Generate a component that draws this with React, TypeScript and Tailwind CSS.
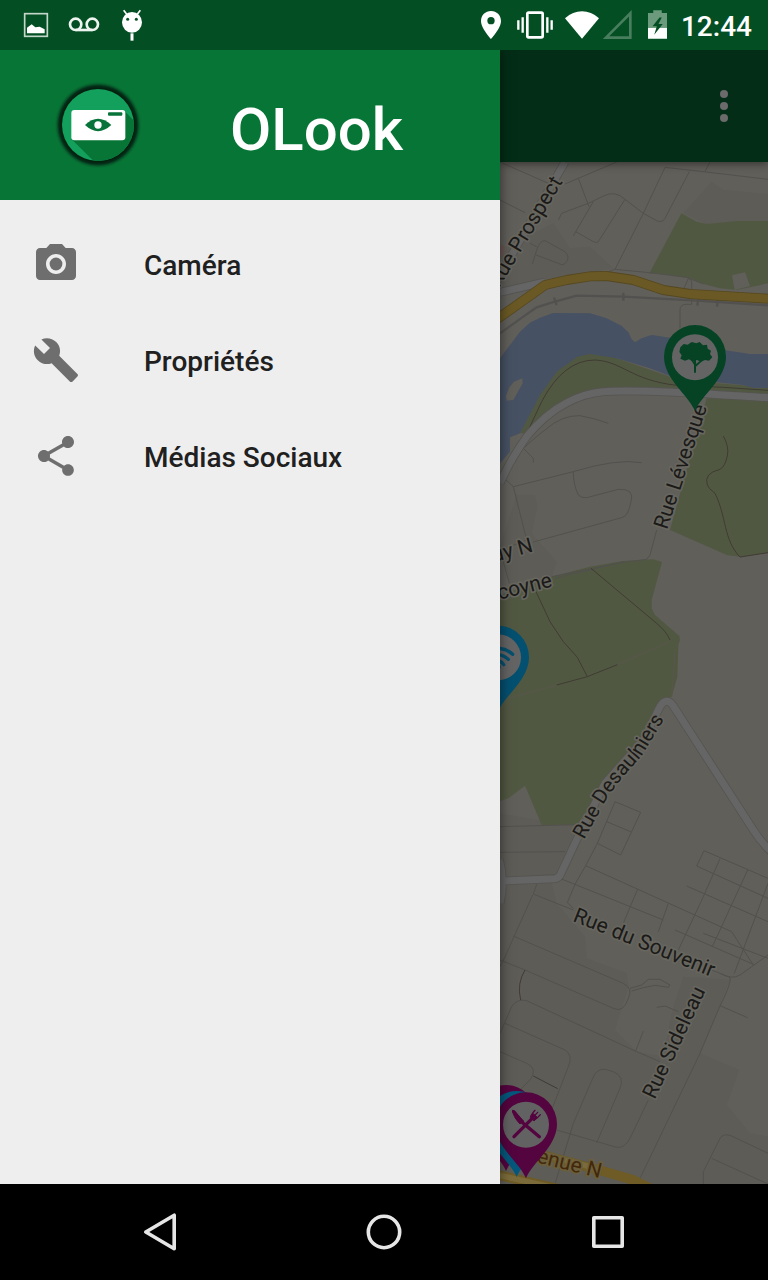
import type { ReactNode } from "react";
import { MdBuild, MdCameraAlt, MdShare } from "react-icons/md";
import type { IconType } from "react-icons";

const menu: { label: string; icon: IconType }[] = [
  { label: "Caméra", icon: MdCameraAlt },
  { label: "Propriétés", icon: MdBuild },
  { label: "Médias Sociaux", icon: MdShare },
];

function StatusBar() {
  return (
    <div className="flex h-[50px] shrink-0 items-center justify-between bg-[#034f23] pr-4 pl-3 text-white">
      <div className="flex">
        <svg viewBox="36 0 144 150" className="h-[50px] w-12" aria-hidden="true">
          <rect x="74" y="41" width="68" height="68" fill="none" stroke="#c3d6ca" strokeWidth="5" />
          <path d="M81 100V83L95 73L106 82L119 80L134 88V100Z" fill="#fff" />
        </svg>
        <svg viewBox="180 0 144 150" className="h-[50px] w-12" fill="none" stroke="#eef4f0" strokeWidth="8" aria-hidden="true">
          <circle cx="227" cy="73" r="17" />
          <circle cx="277" cy="73" r="17" />
          <path d="M227 90H277" />
        </svg>
        <svg viewBox="324 0 144 150" className="h-[50px] w-12" aria-hidden="true">
          <path d="M371 31L382 45M421 31L410 45" stroke="#fff" strokeWidth="5" />
          <ellipse cx="396" cy="67" rx="30" ry="31" fill="#fff" />
          <circle cx="383" cy="58" r="4.500" fill="#034f23" />
          <circle cx="409" cy="58" r="4.500" fill="#034f23" />
          <path d="M396 100V122" stroke="#fff" strokeWidth="9" />
        </svg>
      </div>
      <div className="flex items-center">
        <svg viewBox="63 0 60 150" className="mr-4 h-[50px] w-5" aria-hidden="true">
          <path fillRule="evenodd" fill="#fff" d="M93 33C76 33 63 46 63 63C63 85 93 117 93 117S123 85 123 63C123 46 110 33 93 33ZM93 51A11 11 0 1 1 93 73A11 11 0 1 1 93 51Z" />
        </svg>
        <svg viewBox="171 0 108 150" className="mr-3 h-[50px] w-9" fill="none" stroke="#fff" aria-hidden="true">
          <rect x="202" y="38" width="46" height="74" rx="4" strokeWidth="8" />
          <path d="M175 61V89M188 52V98M262 52V98M275 61V89" strokeWidth="7" />
        </svg>
        <svg viewBox="314 0 104 150" className="mr-1 h-[50px] w-[34px]" aria-hidden="true">
          <path fill="#fff" d="M314 54Q338 33 366 33T418 54L366 117Z" />
        </svg>
        <svg viewBox="429 0 87 150" className="mr-4 h-[50px] w-[29px]" aria-hidden="true">
          <path d="M438 113L511 40V113Z" fill="none" stroke="#487e5d" strokeWidth="8" />
        </svg>
        <svg viewBox="564 0 58 150" className="mr-[14px] h-[50px] w-[19px]" aria-hidden="true">
          <path d="M564 38H580V30H606V38H622V84H564Z" fill="#6b9a7c" />
          <path d="M564 84H622V117H564Z" fill="#fff" />
          <path d="M599 52L578 79H591L583 105L609 72H596L606 52Z" fill="#034f23" />
        </svg>
        <time className="pt-1 text-[28px] leading-8 font-medium">12:44</time>
      </div>
    </div>
  );
}

function Logo() {
  return (
    <svg viewBox="163 93 264 264" className="size-[88px] shrink-0" role="img" aria-label="OLook">
      <defs>
        <radialGradient id="halo">
          <stop offset="0.840" stopColor="#03210f" />
          <stop offset="0.890" stopColor="#04301a" />
          <stop offset="1" stopColor="#077535" stopOpacity="0" />
        </radialGradient>
        <clipPath id="disc">
          <circle cx="295" cy="225" r="108" />
        </clipPath>
      </defs>
      <circle cx="295" cy="225" r="132" fill="url(#halo)" />
      <g clipPath="url(#disc)">
        <path d="M180 110H410V340H180Z" fill="#139f5c" />
        <path d="M375 184L480 289V410H360L216 268Z" fill="#077535" />
      </g>
      <rect x="215" y="180" width="162" height="91" rx="9" fill="#fff" />
      <rect x="325" y="187" width="43" height="10" rx="3" fill="#08743a" />
      <path d="M256 225Q295 188 335 225Q295 262 256 225Z" fill="#08743a" />
      <circle cx="295" cy="225" r="11" fill="#fff" />
    </svg>
  );
}

function Pin({ x, y, color, children }: { x: number; y: number; color: string; children?: ReactNode }) {
  return (
    <g transform={`translate(${x} ${y})`}>
      <path d="M0 163C-18 116 -93 68 -93 0A93 95 0 0 1 93 0C93 68 18 116 0 163Z" fill={color} />
      {children}
    </g>
  );
}

/* Map drawing, three units to a pixel */
function CityMap() {
  return (
    <svg
      viewBox="30 36 804 3066"
      preserveAspectRatio="xMinYMin slice"
      className="absolute inset-0 size-full"
      role="img"
      aria-label="Carte"
    >
      <rect x="30" y="36" width="804" height="3066" fill="#605f5a" />

      {/* built-up blocks */}
      <g fill="#5d5c57">
        <path d="M30 300L190 220L240 295L300 290L370 355L150 390L30 420Z" />
        <path d="M580 190L665 95L700 120L834 132V213L650 222Z" />
        <path d="M80 1034L135 1036L142 1070L125 1150L200 1236L185 1280L60 1300L30 1190Z" />
        <path d="M30 1990L140 2010L262 2024L200 2180L30 2190Z" />
        <path d="M30 2200H185L200 2260L285 2360L290 2425L410 2470L415 2510L375 2640L440 2705L520 2720L545 2590L580 2480L720 2490L630 2710L748 2760L710 2865L780 2950L834 2960V3102H30Z" />
      </g>
      <path d="M30 282L45 290V310L30 322Z" fill="#685653" />

      {/* parks */}
      <g fill="#515842">
        <path d="M574 190L620 215L650 222L740 213H834V400L740 420L690 415L640 402L600 385L520 372L478 370Z" />
        <path d="M95 840C130 740 200 640 270 615Q320 606 380 625L540 680L640 696L834 712V730L400 716Q230 720 110 850L90 850Z" />
        <path d="M650 745L834 750V1208L750 1220L712 1216L540 1140L640 780Z" />
        <path d="M30 1335L185 1280L300 1250L400 1233L490 1228L516 1236L485 1350V1375L495 1395L568 1458L570 1470L565 1485L562 1580L545 1640L520 1650L480 1745L420 1830L350 1890L262 2024L155 2025L105 1907L75 1930L55 1945L30 1953Z" />
      </g>
      <path d="M726 376L765 367L780 408L734 420Z" fill="#605f5a" />

      {/* river */}
      <path
        d="M30 625L90 545L120 518L150 503L190 489L300 490L350 505L395 528L415 547L425 568L435 577L455 565L485 555L540 563L640 590L720 603L780 612H834V714H790L760 705L640 692L540 678L480 655L430 640L380 625L300 612L262 620L200 665L150 735L90 850L60 862V905L30 940Z"
        fill="#465163"
      />
      <path d="M97 685L98 700L70 750L50 752L48 738L58 712L72 695Z" fill="#605f5a" />

      {/* footpaths and small streets */}
      <g fill="none" stroke="#52514d" strokeWidth="3">
        <path d="M30 36L175 100M30 150L105 188M225 102L265 85L380 36M265 85L297 170M205 210L215 190L300 158L340 138Q375 120 405 148L460 190L525 52L640 65L834 88M645 64L660 36M405 148L325 275Q320 280 310 275L257 245L250 258M257 245L310 155M460 190L375 358L478 368L590 382L640 402M460 190L500 212Q517 220 525 205L598 65M355 365L375 358" />
        <path d="M127 342L140 300Q150 270 165 272L225 305Q240 320 230 335Q220 350 205 340L138 315M120 280L140 290M570 535V480Q570 462 590 463H605V392L595 385L582 415" />
        <path d="M100 895L130 925V938M165 840Q215 795 270 797Q315 805 355 820M100 895Q150 850 165 840" />
        <path d="M48 990L70 1010L110 1170L60 1190M70 1010L250 965Q380 925 455 938M250 965Q250 1005 265 1035Q275 1045 290 1043L385 1018Q435 1015 423 1055Q415 1100 395 1103L130 1176M500 1140L480 1215L470 1228M30 1200L58 1300" />
        <path d="M185 1280L400 1237L470 1228M195 1285L400 1235" />
        <path d="M555 1500L545 1640M60 1643L200 1606M382 1544L540 1475" stroke="#58564b" />
        <path d="M30 2030L265 2024M30 2107L225 2105M232 2258L255 2203L287 2147L322 2080L375 1955L452 1987L392 2115L322 2080M350 2015L422 2045M287 2147L725 2345L790 2445M215 2187L520 2310M140 2203L130 2232L250 2280M128 2235L45 2420L30 2450" />
        <path d="M620 2148L642 2102L834 2185M620 2148L834 2245M690 2126L640 2240L565 2400M773 2160L667 2390M834 2200L733 2470M590 2208L834 2315M555 2340L790 2443M443 2217L400 2320M535 2260L505 2345M640 2350L834 2425M690 2470Q725 2490 750 2475L834 2415M665 2460L720 2482Q725 2500 690 2568L630 2710L450 3085M690 2567L773 2603M232 2258L250 2275" />
        <path d="M70 2358L400 2500Q430 2515 415 2545Q400 2590 370 2575L105 2460L30 2430M420 2515L455 2505L475 2488H510L540 2505L535 2512L495 2506L460 2513L425 2523M30 2650L65 2570Q80 2545 110 2552L440 2705L510 2735M45 2620L225 2700Q250 2715 235 2750L185 2880M30 2705L110 2740Q145 2755 120 2790L80 2830M500 2572L525 2568L565 2585M460 2643L437 2703" />
        <path d="M200 2940L380 2992Q405 2995 420 2965L475 2850M320 2978L390 2815Q405 2780 370 2765L345 2758Q320 2755 308 2785L250 2920L195 3102M640 3102V3065L690 2965Q700 2948 725 2958L834 3010M665 3025L834 3102" />
      </g>
      <g fill="none" stroke="#403b33" strokeWidth="3">
        <path d="M108 855L155 755Q220 630 315 630C400 635 420 690 560 706L700 712L834 721" />
        <path d="M700 858Q718 890 712 918Q705 950 690 958Q640 970 652 1005Q655 1015 675 1030C710 1100 700 1170 750 1221L834 1208" />
        <path d="M303 1255L500 1420Q530 1445 540 1470M138 1325L180 1415L220 1475L262 1522L292 1580M200 1605L292 1580L382 1544" />
        <path d="M105 2460Q80 2500 92 2550M130 2778L203 2816" />
      </g>

      {/* railway */}
      <g fill="none" stroke="#52514f" strokeWidth="7">
        <path d="M30 550L100 500L140 472L200 453L260 437L400 440L620 452L834 466" />
        <path d="M192 443L200 465M400 428V452M625 442L622 467M683 446L681 470" />
      </g>

      {/* secondary roads */}
      <g fill="none" strokeLinejoin="round">
        <path d="M225 36L130 200L20 395M30 427L165 396M30 1000Q60 930 110 860C190 760 280 730 340 725C450 715 700 735 834 743M36 2193L195 2186Q208 2184 213 2170L262 2065L345 1900L460 1770L510 1670Q528 1640 548 1665L790 2040Q815 2080 850 2110M28 2130Q45 2190 30 2260" stroke="#555450" strokeWidth="26" />
        <path d="M225 36L130 200L20 395M30 427L165 396M30 1000Q60 930 110 860C190 760 280 730 340 725C450 715 700 735 834 743M36 2193L195 2186Q208 2184 213 2170L262 2065L345 1900L460 1770L510 1670Q528 1640 548 1665L790 2040Q815 2080 850 2110M28 2130Q45 2190 30 2260" stroke="#656566" strokeWidth="21" />
      </g>

      {/* main roads */}
      <g fill="none" strokeLinejoin="round">
        <path d="M20 508L165 405L230 390L300 379L350 378L430 390L520 420L600 432L834 446" stroke="#564820" strokeWidth="30" />
        <path d="M20 508L165 405L230 390L300 379L350 378L430 390L520 420L600 432L834 446" stroke="#6a5925" strokeWidth="25" />
        <path d="M100 3000L320 3058L430 3090L500 3125M20 3074L230 3122" stroke="#6e5b25" strokeWidth="29" />
        <path d="M100 2998L300 3050M20 3074L230 3122" stroke="#7b6b3b" strokeWidth="17" />
      </g>

      {/* street names */}
      <defs>
        <path id="desaulniers" d="M282 2070L348 1950Q370 1915 400 1880L455 1818L478 1780L540 1680" />
      </defs>
      <g className="font-['Roboto',sans-serif]" fontSize="63" fill="#1b1a18" stroke="#67665f" strokeWidth="10" strokeLinejoin="round" paintOrder="stroke">
        <text transform="translate(219 95) rotate(-59)" textAnchor="end">Rue Prospect</text>
        <text transform="translate(531 1141) rotate(-72)">Rue Lévesque</text>
        <text transform="translate(132 1204) rotate(-15)" textAnchor="end">uy N</text>
        <text transform="translate(189 1309) rotate(-14)" textAnchor="end">coyne</text>
        <text fontSize="61">
          <textPath href="#desaulniers">Rue Desaulniers</textPath>
        </text>
        <text transform="translate(246 2312) rotate(22)">Rue du Souvenir</text>
        <text transform="translate(494 2850) rotate(-65)">Rue Sideleau</text>
        <text transform="translate(138 3037) rotate(14)" fill="#43280a" stroke="#6b5f3c">enue N</text>
      </g>

      {/* markers */}
      <Pin x={615} y={620} color="#064325">
        <circle cy="2" r="69" fill="#646464" />
        <g fill="#064325">
          <path d="M-44 -28L-34 -38L-22 -36L-10 -44L4 -40L14 -44L24 -34L36 -36L38 -24L48 -18L45 -8L52 2L42 12L30 10L18 15L6 10L-8 14L-18 8L-30 12L-44 6L-40 -4L-47 -14Z" />
          <path d="M-3 8H3V22L18 10L22 13L3 30V48H-3V24L-12 10L-7 9L-3 15Z" />
        </g>
      </Pin>
      <Pin x={24} y={1522} color="#045070">
        <circle cy="0" r="69" fill="#646464" />
        <g fill="none" stroke="#045070" strokeWidth="10" strokeLinecap="round">
          <path d="M-30 -22Q15 -36 44 -9M-22 -5Q10 -15 31 6M-12 11Q6 6 17 22" />
          <circle cx="0" cy="28" r="3" />
        </g>
      </Pin>
      <Pin x={48} y={2900} color="#54043f" />
      <Pin x={80} y={2918} color="#04587b" />
      <Pin x={108} y={2922} color="#54043f">
        <circle cy="2" r="69" fill="#626262" />
        <g stroke="#54043f" strokeLinecap="round">
          <path d="M-10 -4L-37 -37M-10 -4L40 38" strokeWidth="10" />
          <path d="M-40 -41Q-40 -23 -18 0L-8 -8Z" fill="#54043f" strokeWidth="3" />
          <path d="M-36 38L18 -16" strokeWidth="10" />
          <path d="M14 -23Q20 -34 27 -41M20 -19L35 -35M27 -14Q36 -19 43 -28" strokeWidth="4" fill="none" />
          <path d="M13 -21L22 -31L34 -20L25 -10Z" fill="#54043f" strokeWidth="3" />
        </g>
      </Pin>
    </svg>
  );
}

function Drawer() {
  return (
    <aside className="z-10 flex w-[500px] shrink-0 flex-col bg-[#eeeeee] shadow-[0_0_12px_rgba(0,0,0,0.55)]">
      <header className="flex h-[150px] shrink-0 items-center bg-[#077535] pl-[54px]">
        <Logo />
        <h1 className="mt-[10px] ml-[88px] text-[60px] leading-[70px] font-medium text-white">OLook</h1>
      </header>
      <nav className="py-4" aria-label="Menu principal">
        <ul>
          {menu.map(({ label, icon: Icon }) => (
            <li key={label}>
              <a href="#" className="flex h-24 items-center gap-16 px-8 text-[28px] leading-8 font-medium text-[#202020]">
                <Icon className="size-12 text-[#6e6e6e]" aria-hidden="true" />
                <span className="pt-1">{label}</span>
              </a>
            </li>
          ))}
        </ul>
      </nav>
    </aside>
  );
}

function NavigationBar() {
  return (
    <div className="flex h-24 shrink-0 bg-black px-12">
      <button type="button" aria-label="Retour" className="flex flex-1 items-center justify-center">
        <svg viewBox="0 0 48 48" className="size-12" fill="none" stroke="#e6e6e6" strokeWidth="3.600" strokeLinejoin="round">
          <path d="M38.200 7.200V40.800L9.800 24Z" />
        </svg>
      </button>
      <button type="button" aria-label="Accueil" className="flex flex-1 items-center justify-center">
        <svg viewBox="0 0 48 48" className="size-12" fill="none" stroke="#e6e6e6" strokeWidth="3.600">
          <circle cx="24" cy="24" r="15.700" />
        </svg>
      </button>
      <button type="button" aria-label="Applications récentes" className="flex flex-1 items-center justify-center">
        <svg viewBox="0 0 48 48" className="size-12" fill="none" stroke="#e6e6e6" strokeWidth="3.600" strokeLinejoin="round">
          <rect x="9.800" y="9.800" width="28.400" height="28.400" />
        </svg>
      </button>
    </div>
  );
}

export default function App() {
  return (
    <div className="flex min-h-screen flex-col font-['Roboto',sans-serif]">
      <StatusBar />
      <div className="flex flex-1 overflow-hidden">
        <Drawer />
        <main className="flex min-w-0 flex-1 flex-col">
          <div className="z-[5] flex h-28 shrink-0 items-center justify-end bg-[#032d16] pr-5 shadow-[0_2px_8px_rgba(0,0,0,0.45)]">
            <button type="button" aria-label="Plus d’options" className="flex h-12 w-12 items-center justify-center">
              <svg viewBox="0 0 48 48" className="size-12" fill="#6b6b6b">
                <circle cx="24" cy="12" r="4" />
                <circle cx="24" cy="24" r="4" />
                <circle cx="24" cy="36" r="4" />
              </svg>
            </button>
          </div>
          <div className="relative flex-1 overflow-hidden">
            <CityMap />
          </div>
        </main>
      </div>
      <NavigationBar />
    </div>
  );
}
